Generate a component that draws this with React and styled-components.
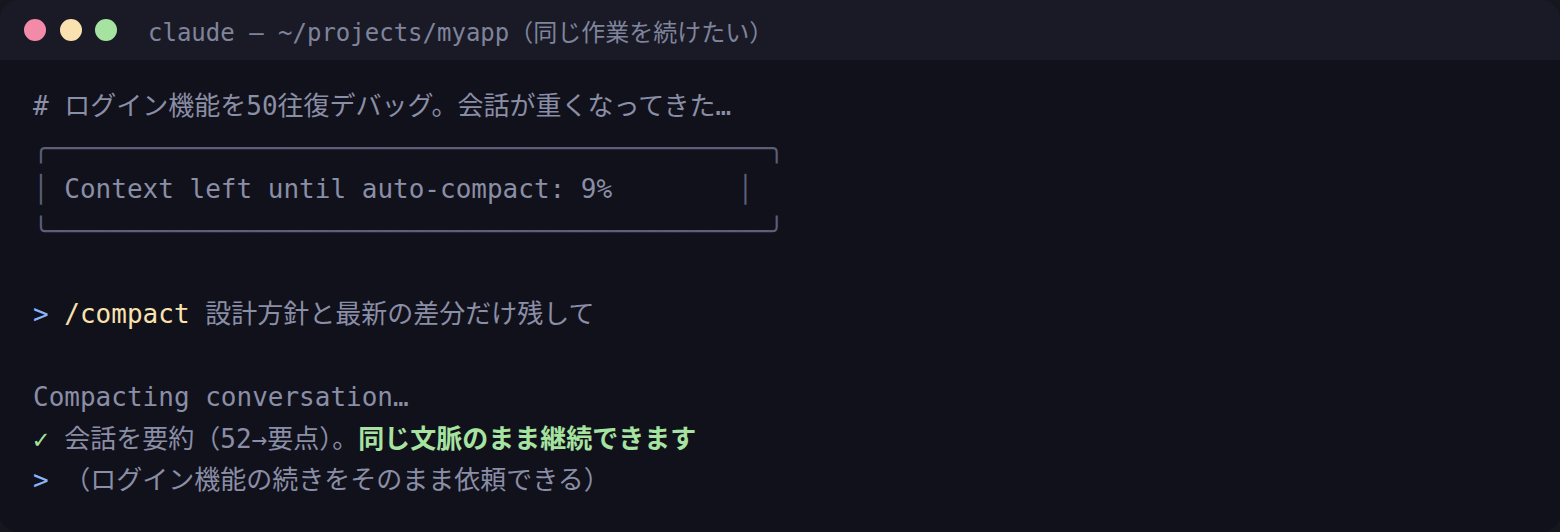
import React from "react";
import styled, { createGlobalStyle } from "styled-components";

const Global = createGlobalStyle`
  html, body { margin: 0; padding: 0; background: #16161f; }
  body { width: 1560px; height: 532px; overflow: hidden; }
`;

const Window = styled.div`
  width: 1560px;
  height: 532px;
  border-radius: 18px;
  overflow: hidden;
  background: #11111b;
  display: flex;
  flex-direction: column;
`;

const TitleBar = styled.div`
  height: 60px;
  flex: none;
  background: #1a1a26;
  display: flex;
  align-items: center;
  padding-left: 24px;
`;

const Lights = styled.div`
  display: flex;
  gap: 13.5px;
  margin-right: 31px;
`;

const Light = styled.span`
  width: 22px;
  height: 22px;
  border-radius: 50%;
  background: ${(p) => p.$c};
`;

const Title = styled.div`
  font-family: "DejaVu Sans Mono", "Noto Sans CJK JP", monospace;
  font-size: 24px;
  color: #7f849c;
  white-space: pre;
`;

const Body = styled.div`
  padding: 26px 33px 0;
  font-family: "DejaVu Sans Mono", "Noto Sans CJK JP", monospace;
  font-size: 26px;
  line-height: 1.6;
  color: #8a8ea6;
`;

const Line = styled.div`
  white-space: pre;
  min-height: 41.6px;
`;

const BoxLine = styled(Line)`
  color: #5c5f77;
`;

const Muted = styled.span`
  color: #8a8ea6;
`;

const Prompt = styled.span`
  color: #89b4fa;
`;

const Cmd = styled.span`
  color: #f9e2af;
`;

const Check = styled.span`
  color: #a6e3a1;
`;

const Strong = styled.span`
  color: #a6e3a1;
  font-weight: 700;
`;

const dash = "─".repeat(46);

export default function App() {
  return (
    <>
      <Global />
      <Window>
        <TitleBar>
          <Lights>
            <Light $c="#f38ba8" />
            <Light $c="#f9e2af" />
            <Light $c="#a6e3a1" />
          </Lights>
          <Title>claude – ~/projects/myapp（同じ作業を続けたい）</Title>
        </TitleBar>
        <Body>
          <Line># ログイン機能を50往復デバッグ。会話が重くなってきた…</Line>
          <BoxLine>{"╭" + dash + "╮"}</BoxLine>
          <BoxLine>
            {"│ "}
            <Muted>Context left until auto-compact: 9%</Muted>
            {"        │"}
          </BoxLine>
          <BoxLine>{"╰" + dash + "╯"}</BoxLine>
          <Line> </Line>
          <Line>
            <Prompt>{"> "}</Prompt>
            <Cmd>/compact</Cmd> 設計方針と最新の差分だけ残して
          </Line>
          <Line> </Line>
          <Line>Compacting conversation…</Line>
          <Line>
            <Check>✓</Check> 会話を要約（52→要点）。<Strong>同じ文脈のまま継続できます</Strong>
          </Line>
          <Line>
            <Prompt>{"> "}</Prompt>（ログイン機能の続きをそのまま依頼できる）
          </Line>
        </Body>
      </Window>
    </>
  );
}
